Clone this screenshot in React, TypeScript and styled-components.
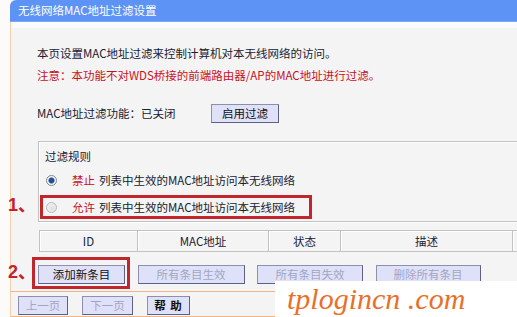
import styled, { createGlobalStyle } from "styled-components";

const GlobalStyle = createGlobalStyle`
  html, body {
    margin: 0;
    padding: 0;
    background: #fcfbf9;
    overflow: hidden;
  }
  body {
    font-family: "Noto Sans CJK SC", "Noto Sans", sans-serif;
  }
`;

const Page = styled.div`
  position: relative;
  width: 517px;
  height: 317px;
  overflow: hidden;
  padding-left: 10px;
  box-sizing: border-box;
  display: flex;
`;

const Panel = styled.div`
  flex: none;
  width: 560px;
  display: flex;
  flex-direction: column;
`;

const Header = styled.div`
  height: 21px;
  line-height: 21px;
  padding-left: 8px;
  background: #5e93f6;
  border-bottom: 1px solid #7aa6f3;
  border-top-left-radius: 6px;
  color: #fff;
  font-size: 11.5px;
`;

const Body = styled.div`
  flex: 1;
  background: #f4f4f4;
  border-left: 1px solid #f1cfa8;
  font-size: 11.5px;
  color: #1a2133;
`;

const Stripe = styled.div`
  height: 6px;
  background: #fbfbfd;
`;

const Section = styled.div`
  padding-left: 26px;
`;

const Intro = styled.div`
  margin-top: 14px;
  line-height: 22px;
`;

const Note = styled.div`
  color: #c8101e;
`;

const StatusRow = styled.div`
  margin-top: 17px;
  height: 20px;
  display: flex;
  align-items: center;
`;

const StatusLabel = styled.span`
  width: 174px;
`;

const Button = styled.button<{ $w: number; $muted?: boolean; $bold?: boolean }>`
  box-sizing: border-box;
  width: ${(p) => p.$w}px;
  height: 19px;
  padding: 0;
  background: #dfe1f9;
  border: 1px solid #5e6186;
  border-top-color: #8c8fb0;
  border-left-color: #8c8fb0;
  font-family: "Noto Sans CJK SC", "Noto Sans", sans-serif;
  font-size: 11.5px;
  line-height: 17px;
  color: ${(p) => (p.$muted ? "#a2a6c6" : "#111")};
  font-weight: ${(p) => (p.$bold ? 700 : 400)};
  letter-spacing: ${(p) => (p.$bold ? "1px" : "0")};
`;

const Rules = styled.div`
  margin: 18px 0 0 1px;
  padding: 0 0 3px;
  border-top: 1px solid #c2c2c2;
  border-left: 1px solid #c2c2c2;
  border-bottom: 1px solid #c2c2c2;
  box-shadow: inset 1px 1px 0 #fff, 0 1px 0 #fff;
`;

const Legend = styled.div`
  margin-top: 3px;
  padding-left: 6px;
  line-height: 22px;
`;

const OptionRow = styled.div<{ $gap: number }>`
  position: relative;
  margin-top: ${(p) => p.$gap}px;
  height: 22px;
  padding-left: 7px;
  display: flex;
  align-items: center;
`;

const Radio = styled.span<{ $checked?: boolean }>`
  box-sizing: border-box;
  width: 11px;
  height: 11px;
  border-radius: 50%;
  border: 1px solid ${(p) => (p.$checked ? "#7d8593" : "#b4b7bd")};
  background: ${(p) =>
    p.$checked
      ? "radial-gradient(circle at 50% 50%, #2a4e93 0 2.5px, #7f9ccc 3px, #f6f6f6 3.5px)"
      : "radial-gradient(circle at 60% 60%, #dedede, #f8f8f8)"};
  margin-right: 15px;
`;

const Verb = styled.span`
  color: #c8101e;
  margin-right: 4px;
`;

const Marker = styled.span<{ $t: number; $b: number; $l: number; $w?: number; $r?: number }>`
  position: absolute;
  top: ${(p) => p.$t}px;
  bottom: ${(p) => p.$b}px;
  left: ${(p) => p.$l}px;
  ${(p) => (p.$w ? `width: ${p.$w}px;` : `right: ${p.$r ?? 0}px;`)}
  box-sizing: border-box;
  border: 3px solid #c0262c;
  pointer-events: none;
`;

const Step = styled.span<{ $l: number; $t: number }>`
  position: absolute;
  left: ${(p) => p.$l}px;
  top: ${(p) => p.$t}px;
  font-family: "Liberation Sans", "Noto Sans CJK SC", sans-serif;
  font-weight: 700;
  font-size: 18px;
  line-height: 20px;
  color: #c8202a;
  white-space: nowrap;
`;

const Table = styled.div`
  margin: 8px 0 0 2px;
  display: grid;
  grid-template-columns: 98px 131px 72px 172px 1fr;
  border-top: 1px solid #c2c2c2;
  border-bottom: 1px solid #c2c2c2;
  border-left: 1px solid #c2c2c2;
`;

const HeadCell = styled.div`
  height: 20px;
  line-height: 20px;
  text-align: center;
  border-right: 1px solid #c2c2c2;
  box-shadow: inset 1px 1px 0 #fff;
`;

const Actions = styled.div`
  margin: 13px 0 0 1px;
  padding-bottom: 7px;
  display: flex;
  gap: 12.5px;
`;

const Marked = styled.div`
  position: relative;
  display: flex;
`;

const Nav = styled.div`
  border-top: 1px solid #f2b684;
  border-bottom: 1px solid #f2b684;
  padding: 4px 0 1px 7px;
  display: flex;
  gap: 14px;
`;

const Watermark = styled.div`
  position: absolute;
  right: 0;
  bottom: 0;
  width: 242px;
  height: 36px;
  padding: 4px 0 0 12px;
  box-sizing: border-box;
  background: #fff;
  font-family: "Liberation Serif", "DejaVu Serif", serif;
  font-style: italic;
  font-size: 30px;
  line-height: 28px;
  color: #e8702a;
  white-space: nowrap;
`;

export default function App() {
  return (
    <>
      <GlobalStyle />
      <Page>
        <Panel>
          <Header>无线网络MAC地址过滤设置</Header>
          <Body>
            <Stripe />
            <Section>
              <Intro>
                <div>本页设置MAC地址过滤来控制计算机对本无线网络的访问。</div>
                <Note>注意：本功能不对WDS桥接的前端路由器/AP的MAC地址进行过滤。</Note>
              </Intro>

              <StatusRow>
                <StatusLabel>MAC地址过滤功能：已关闭</StatusLabel>
                <Button $w={68}>启用过滤</Button>
              </StatusRow>

              <Rules>
                <Legend>过滤规则</Legend>
                <OptionRow $gap={2}>
                  <Radio $checked />
                  <Verb>禁止</Verb>
                  列表中生效的MAC地址访问本无线网络
                </OptionRow>
                <OptionRow $gap={5}>
                  <Radio />
                  <Verb>允许</Verb>
                  列表中生效的MAC地址访问本无线网络
                  {/* annotation over the screenshot */}
                  <Marker $t={-1} $b={-1} $l={1} $w={272} />
                  <Step $l={-31} $t={-1}>1、</Step>
                </OptionRow>
              </Rules>

              <Table>
                <HeadCell>ID</HeadCell>
                <HeadCell>MAC地址</HeadCell>
                <HeadCell>状态</HeadCell>
                <HeadCell>描述</HeadCell>
                <HeadCell />
              </Table>

              <Actions>
                <Marked>
                  <Button $w={87}>添加新条目</Button>
                  <Marker $t={-8} $r={-5} $b={-5} $l={-6} />
                  <Step $l={-30} $t={-3}>2、</Step>
                </Marked>
                <Button $w={107} $muted>所有条目生效</Button>
                <Button $w={106} $muted>所有条目失效</Button>
                <Button $w={105} $muted>删除所有条目</Button>
              </Actions>
            </Section>

            <Nav>
              <Button $w={50} $muted>上一页</Button>
              <Button $w={51} $muted>下一页</Button>
              <Button $w={43} $bold>帮 助</Button>
            </Nav>
          </Body>
        </Panel>
        <Watermark>tplogincn .com</Watermark>
      </Page>
    </>
  );
}
